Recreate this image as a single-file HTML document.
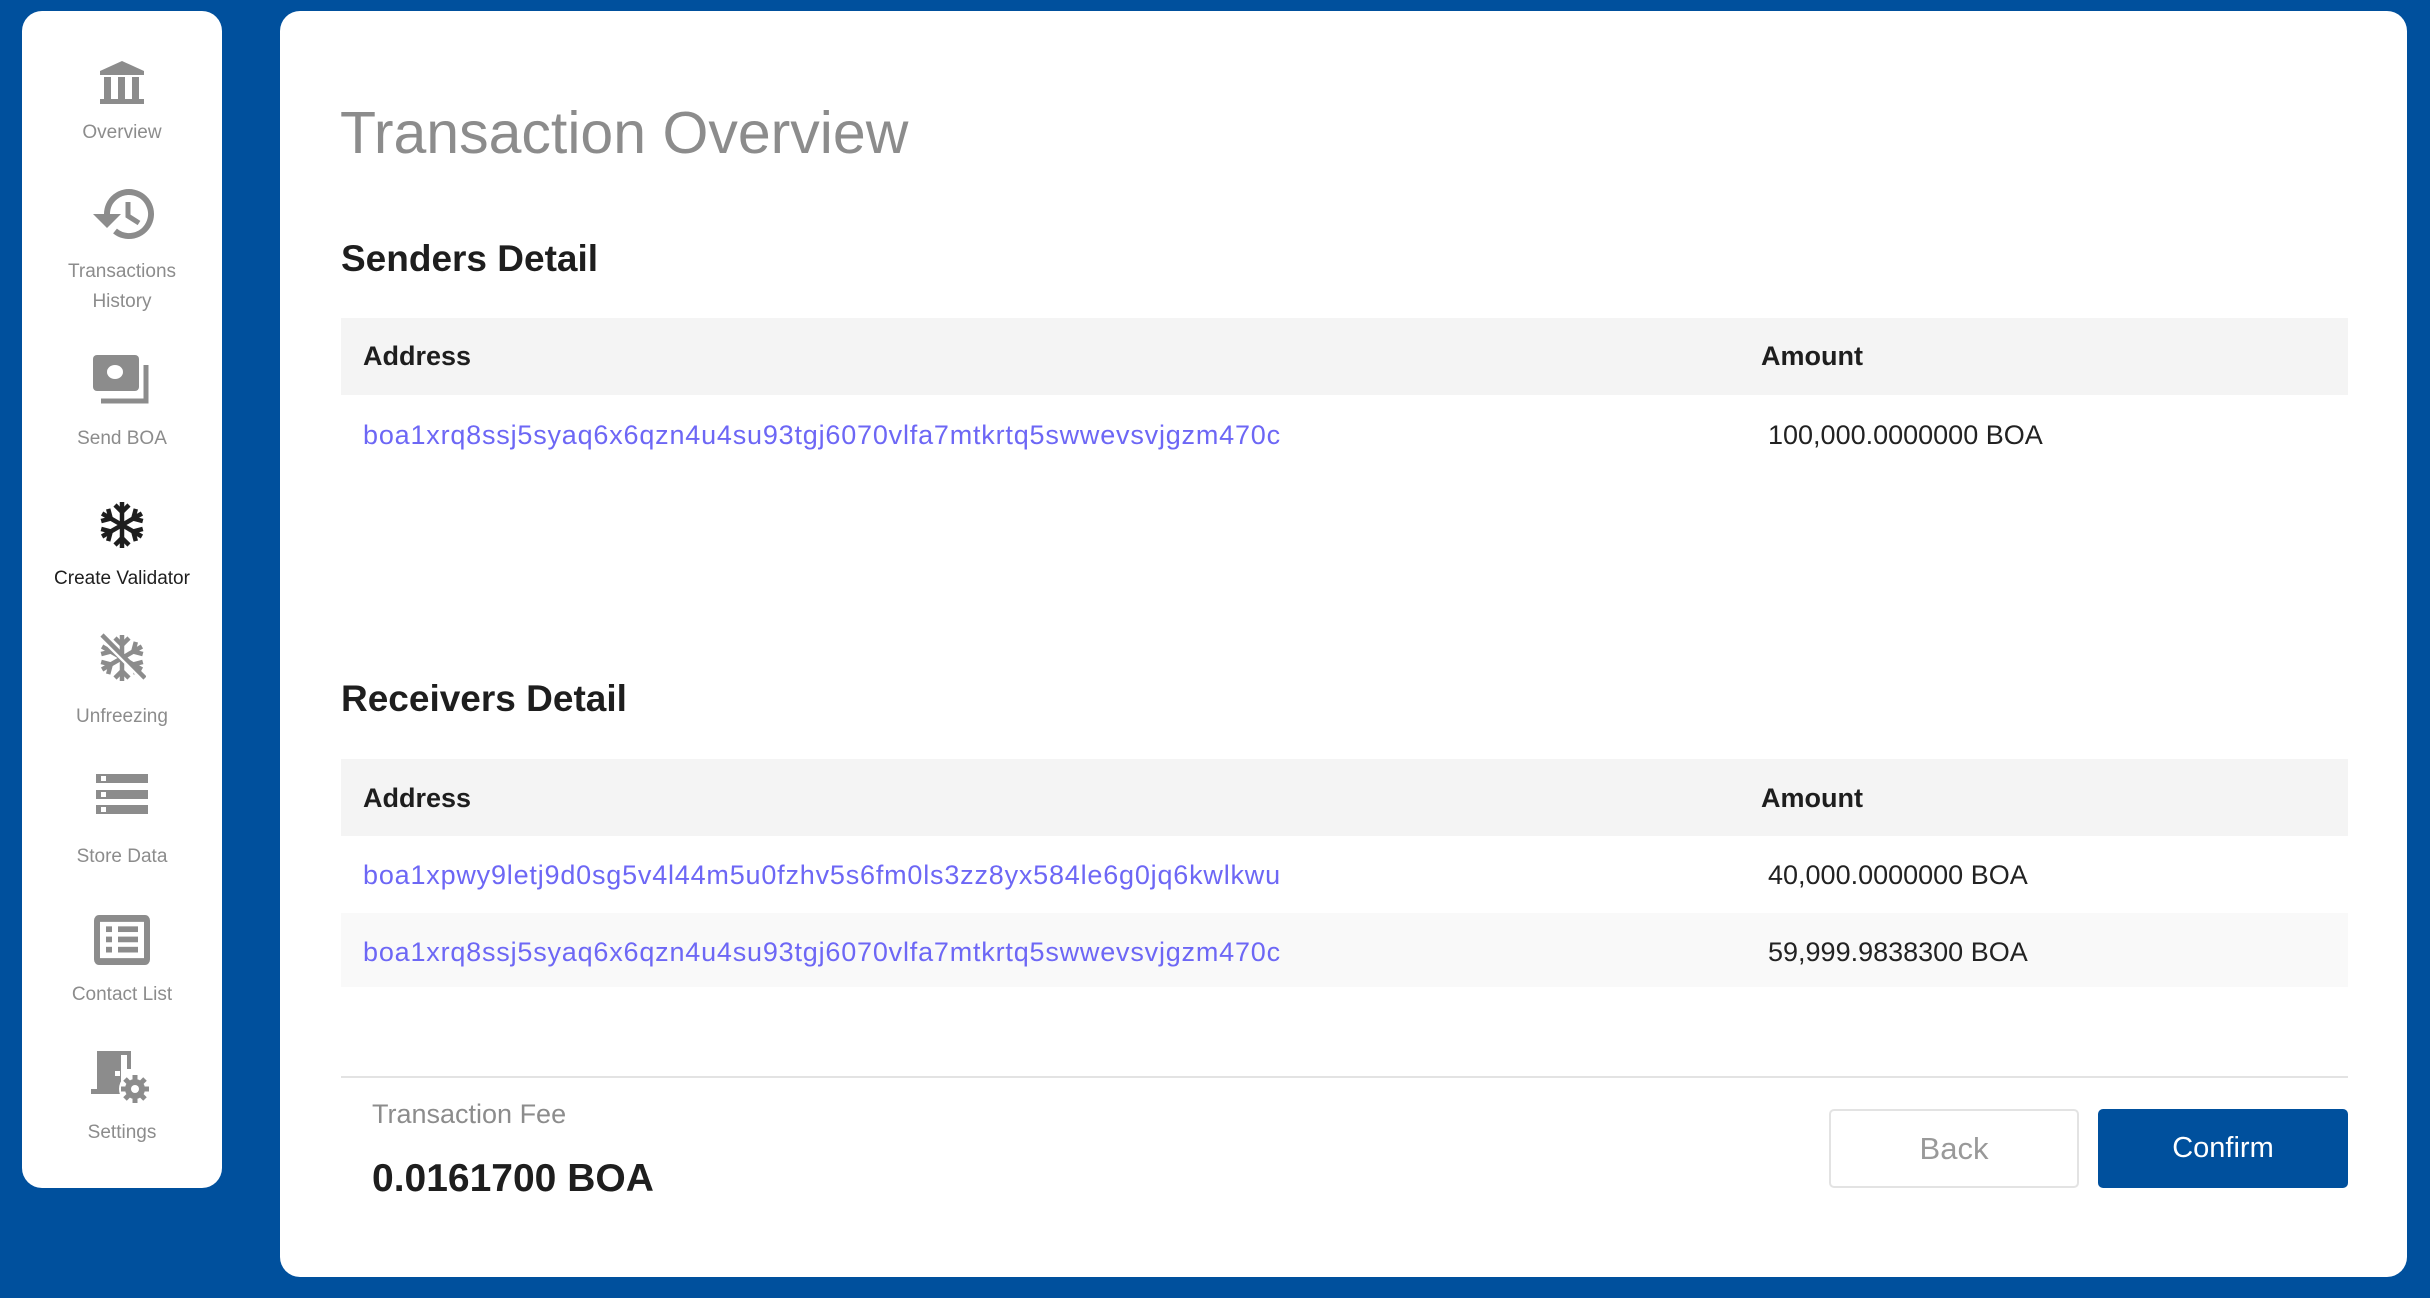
<!DOCTYPE html>
<html><head><meta charset="utf-8"><style>
*{margin:0;padding:0;box-sizing:border-box}
body{width:2430px;height:1298px;background:#00509d;font-family:"Liberation Sans",sans-serif;position:relative;overflow:hidden}
.side{position:absolute;left:22px;top:11px;width:200px;height:1177px;background:#fff;border-radius:20px}
.it{position:absolute;left:0;width:200px;text-align:center;color:#8c8c8c;font-size:19px;line-height:30px}
.ic{position:absolute;left:0;width:200px;display:flex;justify-content:center}
.main{position:absolute;left:280px;top:11px;width:2127px;height:1266px;background:#fff;border-radius:20px}
.a{position:absolute;white-space:nowrap}
.th{position:absolute;left:61px;width:2007px;height:77px;background:#f4f4f4}
.lk{color:#6d67f5;font-size:27px;letter-spacing:0.8px}
.am{color:#222;font-size:27px}
.hd{font-size:27px;color:#1e1e1e;font-weight:bold}
</style></head><body>
<div class="side">
 <div class="ic" style="top:50px"><svg width="48" height="44" viewBox="0 0 48 44" fill="#8c8c8c"><polygon points="24,0 46,10 2,10"/><rect x="2" y="10" width="44" height="4"/><rect x="6" y="16" width="7" height="22"/><rect x="20" y="16" width="7" height="22"/><rect x="34" y="16" width="7" height="22"/><rect x="2" y="38" width="44" height="5"/></svg></div>
 <div class="it" style="top:107px">Overview</div>
 <div class="ic" style="top:175px"><svg width="66" height="56" viewBox="0 0 66 56"><path d="M18 28 A22 22 0 1 1 26 45" fill="none" stroke="#8c8c8c" stroke-width="6"/><polygon points="4,28 32,28 18,42" fill="#8c8c8c"/><path d="M39 16 V30 L50 37" fill="none" stroke="#8c8c8c" stroke-width="5"/></svg></div>
 <div class="it" style="top:246px">Transactions<br>History</div>
 <div class="ic" style="top:344px"><svg width="58" height="54" viewBox="0 0 58 54"><rect x="0" y="0" width="46" height="36" rx="4" fill="#8c8c8c"/><ellipse cx="22" cy="17" rx="8" ry="7" fill="#fff"/><path d="M53 10 V46 H8" fill="none" stroke="#8c8c8c" stroke-width="5"/></svg></div>
 <div class="it" style="top:413px">Send BOA</div>
 <div class="ic" style="top:489px"><svg width="48" height="50" viewBox="-24 -25 48 50" stroke="#1e1e1e" stroke-width="4.5" fill="none"><g id="sf"><line x1="0" y1="-23" x2="0" y2="23"/><path d="M-7 -20 L0 -13 L7 -20 M-7 20 L0 13 L7 20"/></g><use href="#sf" transform="rotate(60)"/><use href="#sf" transform="rotate(-60)"/></svg></div>
 <div class="it" style="top:553px;color:#1e1e1e">Create Validator</div>
 <div class="ic" style="top:622px"><svg width="48" height="50" viewBox="-24 -25 48 50" stroke="#8c8c8c" stroke-width="4.5" fill="none"><g id="sg"><line x1="0" y1="-23" x2="0" y2="23"/><path d="M-7 -20 L0 -13 L7 -20 M-7 20 L0 13 L7 20"/></g><use href="#sg" transform="rotate(60)"/><use href="#sg" transform="rotate(-60)"/><line x1="-22" y1="-22" x2="22" y2="22" stroke="#fff" stroke-width="5"/><line x1="-20" y1="-23" x2="23" y2="20"/></svg></div>
 <div class="it" style="top:691px">Unfreezing</div>
 <div class="ic" style="top:763px"><svg width="52" height="42" viewBox="0 0 52 42" fill="#8c8c8c"><rect y="0" width="52" height="9"/><rect y="16" width="52" height="9"/><rect y="31" width="52" height="9"/><rect x="5" y="2" width="5" height="5" fill="#fff"/><rect x="5" y="18" width="5" height="5" fill="#fff"/><rect x="5" y="33" width="5" height="5" fill="#fff"/></svg></div>
 <div class="it" style="top:831px">Store Data</div>
 <div class="ic" style="top:904px"><svg width="56" height="50" viewBox="0 0 56 44" preserveAspectRatio="none"><rect x="3" y="3" width="50" height="38" rx="2" fill="none" stroke="#8c8c8c" stroke-width="6"/><g fill="#8c8c8c"><rect x="12" y="10" width="6" height="5"/><rect x="24" y="10" width="20" height="5"/><rect x="12" y="19" width="6" height="5"/><rect x="24" y="19" width="20" height="5"/><rect x="12" y="28" width="6" height="5"/><rect x="24" y="28" width="20" height="5"/></g></svg></div>
 <div class="it" style="top:969px">Contact List</div>
 <div class="ic" style="top:1040px"><svg width="62" height="60" viewBox="0 0 62 60" fill="#8c8c8c"><rect x="6" y="0" width="24" height="42"/><rect x="30" y="0" width="10" height="4"/><rect x="36" y="0" width="4" height="18"/><rect x="0" y="38" width="30" height="5"/><rect x="24" y="20" width="5" height="5" fill="#fff"/><circle cx="44" cy="38" r="16" fill="#fff"/><circle cx="44" cy="38" r="10"/><g stroke="#8c8c8c" stroke-width="5"><line x1="44" y1="24" x2="44" y2="52"/><line x1="30" y1="38" x2="58" y2="38"/><line x1="34" y1="28" x2="54" y2="48"/><line x1="34" y1="48" x2="54" y2="28"/></g><circle cx="44" cy="38" r="4" fill="#fff"/></svg></div>
 <div class="it" style="top:1107px">Settings</div>
</div>
<div class="main">
 <div class="a" style="left:60px;top:88px;font-size:59px;color:#8c8c8c">Transaction Overview</div>
 <div class="a" style="left:61px;top:227px;font-size:37px;color:#1e1e1e;font-weight:bold">Senders Detail</div>
 <div class="th" style="top:307px"></div>
 <div class="a hd" style="left:83px;top:330px">Address</div>
 <div class="a hd" style="left:1481px;top:330px">Amount</div>
 <div class="a lk" style="left:83px;top:409px">boa1xrq8ssj5syaq6x6qzn4u4su93tgj6070vlfa7mtkrtq5swwevsvjgzm470c</div>
 <div class="a am" style="left:1488px;top:409px">100,000.0000000 BOA</div>
 <div class="a" style="left:61px;top:667px;font-size:37px;color:#1e1e1e;font-weight:bold">Receivers Detail</div>
 <div class="th" style="top:748px"></div>
 <div class="a hd" style="left:83px;top:772px">Address</div>
 <div class="a hd" style="left:1481px;top:772px">Amount</div>
 <div class="a lk" style="left:83px;top:849px">boa1xpwy9letj9d0sg5v4l44m5u0fzhv5s6fm0ls3zz8yx584le6g0jq6kwlkwu</div>
 <div class="a am" style="left:1488px;top:849px">40,000.0000000 BOA</div>
 <div class="th" style="top:902px;height:74px;background:#f9f9f9"></div>
 <div class="a lk" style="left:83px;top:926px">boa1xrq8ssj5syaq6x6qzn4u4su93tgj6070vlfa7mtkrtq5swwevsvjgzm470c</div>
 <div class="a am" style="left:1488px;top:926px">59,999.9838300 BOA</div>
 <div style="position:absolute;left:61px;top:1065px;width:2007px;height:2px;background:#e3e3e3"></div>
 <div class="a" style="left:92px;top:1088px;font-size:27px;color:#8c8c8c">Transaction Fee</div>
 <div class="a" style="left:92px;top:1146px;font-size:39px;color:#1e1e1e;font-weight:bold">0.0161700 BOA</div>
 <div style="position:absolute;left:1549px;top:1098px;width:250px;height:79px;border:2px solid #e3e3e3;border-radius:5px;color:#999;font-size:31px;text-align:center;line-height:75px">Back</div>
 <div style="position:absolute;left:1818px;top:1098px;width:250px;height:79px;background:#00509d;border-radius:5px;color:#fff;font-size:29px;text-align:center;line-height:79px">Confirm</div>
</div>
</body></html>
